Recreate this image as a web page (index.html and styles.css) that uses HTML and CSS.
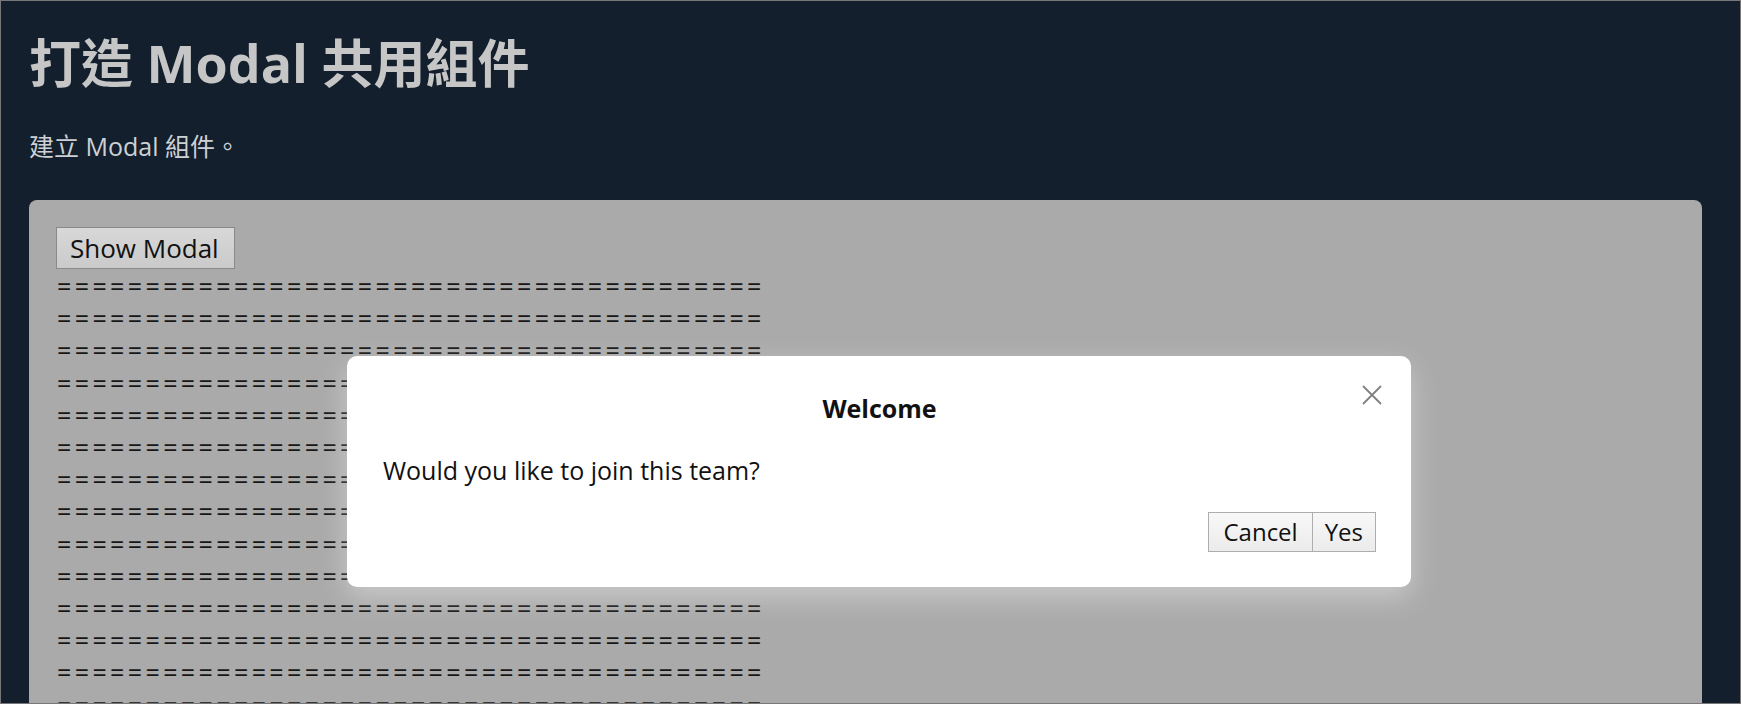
FILE: index.html
```html
<!DOCTYPE html>
<html lang="zh-Hant">
<head>
<meta charset="utf-8">
<title>打造 Modal 共用組件</title>
<link rel="stylesheet" href="styles.css">
</head>
<body>
<div class="frame">
  <h1 class="title">打造 Modal 共用組件</h1>
  <p class="desc">建立 Modal 組件。</p>
  <div class="card">
    <button class="btn btn-show" type="button">Show Modal</button>
    <div class="filler">
      <div class="row">========================================</div>
      <div class="row">========================================</div>
      <div class="row">========================================</div>
      <div class="row">========================================</div>
      <div class="row">========================================</div>
      <div class="row">========================================</div>
      <div class="row">========================================</div>
      <div class="row">========================================</div>
      <div class="row">========================================</div>
      <div class="row">========================================</div>
      <div class="row">========================================</div>
      <div class="row">========================================</div>
      <div class="row">========================================</div>
      <div class="row">========================================</div>
      <div class="row">========================================</div>
      <div class="row">========================================</div>
    </div>
  </div>
  <div class="modal" role="dialog">
    <button class="modal-close" type="button" aria-label="Close">
      <svg width="20" height="20" viewBox="0 0 20 20"><path d="M1 1 L19 19 M19 1 L1 19" stroke="#808080" stroke-width="1.8" fill="none"/></svg>
    </button>
    <div class="modal-title">Welcome</div>
    <div class="modal-body">Would you like to join this team?</div>
    <div class="modal-footer">
      <button class="btn btn-light btn-cancel" type="button">Cancel</button><button class="btn btn-light btn-yes" type="button">Yes</button>
    </div>
  </div>
</div>
</body>
</html>
```

FILE: styles.css
```css
* { box-sizing: border-box; }
html, body { margin: 0; padding: 0; }
body {
  font-family: "Open Sans", "Noto Sans CJK TC", sans-serif;
  background: #131f2c;
}
.frame {
  position: relative;
  width: 1741px;
  height: 704px;
  overflow: hidden;
  border: 1px solid #777;
  padding: 30.8px 38px 0 28px;
  background: #131f2c;
}
.title {
  margin: 0;
  font-size: 52px;
  line-height: 62px;
  font-weight: 700;
  color: #c6c6c6;
}
.desc {
  margin: 35px 0 0;
  font-size: 25px;
  line-height: 34px;
  color: #cdd1d5;
}
.card {
  margin-top: 37.2px;
  height: 600px;
  background: #aaaaaa;
  border-radius: 8px;
  padding: 27px;
}
.btn {
  font-family: "Open Sans", "Noto Sans CJK TC", sans-serif;
  color: #111;
  margin: 0;
  cursor: pointer;
  display: inline-block;
  vertical-align: top;
}
.btn-show {
  height: 42px;
  padding: 0 15px 0 13px;
  font-size: 26px;
  line-height: 40px;
  border: 1px solid #8a8a8a;
  background: linear-gradient(#d8d8d8, #cacaca);
}
.filler {
  margin-top: 1px;
  padding-left: 1px;
  font-size: 25px;
  letter-spacing: 3.4px;
  line-height: 32.2px;
  color: #161616;
  white-space: nowrap;
}
.modal {
  position: absolute;
  left: 346px;
  top: 355px;
  width: 1064px;
  height: 231px;
  background: #fff;
  border-radius: 10px;
  padding: 35px 35px 35px 36px;
  box-shadow: 0 10px 28px rgba(255, 255, 255, 0.38);
  display: flex;
  flex-direction: column;
}
.modal-close {
  position: absolute;
  top: 29px;
  right: 29px;
  width: 20px;
  height: 20px;
  padding: 0;
  border: 0;
  background: none;
  display: block;
}
.modal-close svg { display: block; }
.modal-title {
  font-size: 25px;
  line-height: 34px;
  font-weight: 700;
  text-align: center;
  color: #111;
}
.modal-body {
  margin-top: 28.3px;
  font-size: 25px;
  line-height: 34px;
  color: #111;
}
.modal-footer {
  margin-top: 24.7px;
  display: flex;
  justify-content: flex-end;
}
.btn-light {
  height: 40px;
  font-size: 24px;
  line-height: 38px;
  border: 1px solid #adadad;
  background: linear-gradient(#f8f8f8, #ebebeb);
}
.btn-cancel { padding: 0 14px; }
.btn-yes { padding: 0 12px; margin-left: -1px; }
```
